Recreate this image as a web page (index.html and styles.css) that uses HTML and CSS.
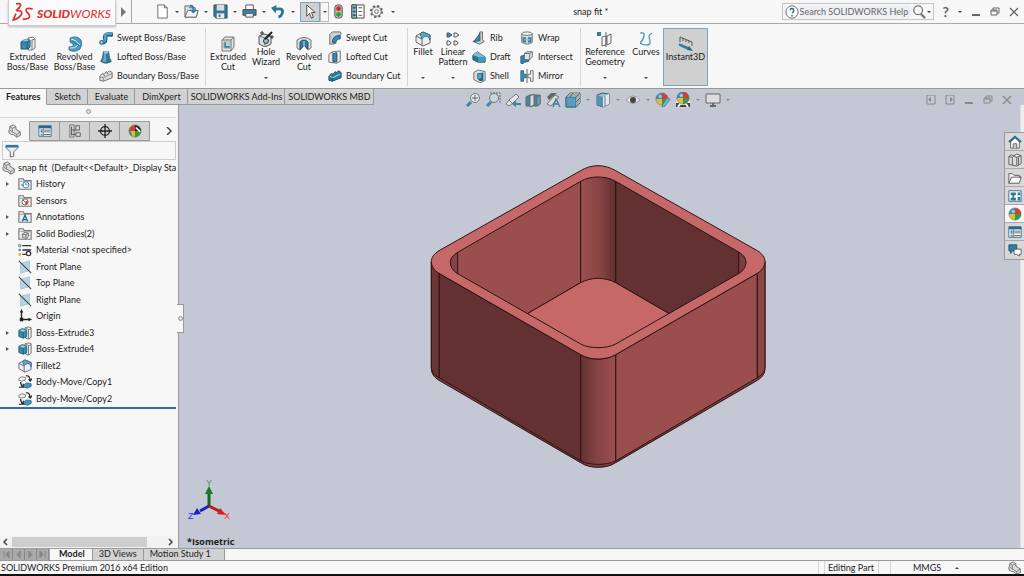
FILE: index.html
```html
<!DOCTYPE html>
<html lang="en">
<head>
<meta charset="utf-8">
<title>snap fit * - SOLIDWORKS</title>
<link rel="stylesheet" href="styles.css">
</head>
<body>
<svg class="defs" aria-hidden="true">
  <defs>
    <linearGradient id="front" x1="0" x2="1" y1="0" y2="0"><stop offset="0" stop-color="#633131"/><stop offset=".45" stop-color="#854242"/><stop offset="1" stop-color="#9d4f4f"/></linearGradient>
    <linearGradient id="back" x1="0" x2="1" y1="0" y2="0"><stop offset="0" stop-color="#9d4f4f"/><stop offset=".55" stop-color="#874444"/><stop offset="1" stop-color="#5f2f2f"/></linearGradient>
    <clipPath id="hollow"><path d="M113 307L482 94C497 85 515 81 534 81S572 85 587 94L956 306C971 315 978 326 978 337S971 362 956 371L587 582C572 590 553 593 534 593S497 590 482 582L113 371C98 362 91 350 91 338S98 316 113 307Z"/></clipPath>
    <clipPath id="disc"><circle cx="8" cy="8" r="7"/></clipPath>
  </defs>
  <symbol id="boss" viewBox="0 0 16 16"><path d="M8 2l5-1 2 2v9l-3 2H8z" fill="#eee" stroke="#777"/><path d="M12 4v10M12 4l3-1" fill="none" stroke="#777"/><path d="M1 6l3-2h6v7l-2 2H1z" fill="#3b8ab0" stroke="#1d5a78"/><path d="M1 6l3-2h6L7 6z" fill="#8cc6df"/><path d="M1 6h6v7M7 6l3-2" fill="none" stroke="#1d5a78"/></symbol>
  <symbol id="solid" viewBox="0 0 16 16"><path d="M8 2l4-1 3 1v11l-3 2-3-1z" fill="#eee" stroke="#666"/><path d="M12 4v11M12 4l3-1M8 2l4 2" fill="none" stroke="#777"/><path d="M1 5l4-2 5 2v7l-4 2-5-2z" fill="#3b8ab0" stroke="#1d5a78"/><path d="M1 5l4-2 5 2-4 2z" fill="#9bd0e4" stroke="#1d5a78" stroke-width=".6"/><path d="M6 7v7" stroke="#1d5a78"/></symbol>
  <symbol id="revolve" viewBox="0 0 16 16"><path d="M3 2Q10-1 14 4q2 5-1 9-5 4-11 1v-3q3 0 5-2L3 6z" fill="#4a9cc2" stroke="#28698a" stroke-width=".8"/><path d="M4 3q4 0 9 6M3 12q5 1 8-3" fill="none" stroke="#d5eef8"/><path d="M5 5l8 5" stroke="#28698a" stroke-width=".8"/></symbol>
  <symbol id="swept" viewBox="0 0 16 16"><path d="M3 13q5 0 4-5t7-4" fill="none" stroke="#1f5f80" stroke-width="5" stroke-linecap="round"/><path d="M3 12q5 0 4-5t7-4" fill="none" stroke="#4ba1c8" stroke-width="3" stroke-linecap="round"/><circle cx="3" cy="13" r="2" fill="#a9d5e6" stroke="#1f5f80"/></symbol>
  <symbol id="loft" viewBox="0 0 16 16"><path d="M5 2q3-1 6 0 0 7 3 11-6 4-12 0 3-4 3-11z" fill="#34799c" stroke="#1f5673"/><path d="M6 3q0 6-2 10l4 1V3z" fill="#69aac8"/><ellipse cx="8" cy="2.500" rx="3" ry="1.500" fill="#8fc6dd"/></symbol>
  <symbol id="boundary" viewBox="0 0 16 16"><path d="M1 8l3-3 2 1 2-3 2 1 2-2 3 2v6L5 14l-4-1z" fill="#ddd" stroke="#666"/><path d="M1 9l4 1 10-5M5 10v4M4 6l3 2M8 4l3 2" fill="none" stroke="#888"/></symbol>
  <symbol id="boundarycut" viewBox="0 0 16 16"><path d="M1 8l3-3 2 1 2-3 2 1 2-2 3 2v6L5 14l-4-1z" fill="#2e7ba0" stroke="#1b4d67"/><path d="M2 8l3 2 9-4" fill="none" stroke="#c6e4f0"/><path d="M5 10v4" stroke="#173f54"/></symbol>
  <symbol id="cut" viewBox="0 0 16 16"><path d="M2 4l3-3h9v10l-3 4H2z" fill="#e2e2e2" stroke="#777"/><path d="M2 4h9v11M11 4l3-3" fill="none" stroke="#777"/><path d="M4 6h6v6H4z" fill="#3583aa" stroke="#9b9b9b"/><path d="M6 6h4v4H6z" fill="#a8d5e6"/></symbol>
  <symbol id="hole" viewBox="0 0 16 16"><path d="M1 5l5-2 7 2v8l-6 3-6-3z" fill="#ddd" stroke="#555"/><path d="M1 5l6 2 6-2M7 7v9" fill="none" stroke="#777"/><circle cx="8" cy="10" r="2.500" fill="#8cc0d6" stroke="#333"/><path d="M7 8l7-7" stroke="#222" stroke-width="2"/><path d="M4 0v4M2 2h4M14 4v4M12 6h4" stroke="#333"/></symbol>
  <symbol id="revcut" viewBox="0 0 16 16"><path d="M1 4q7-5 14 0v8l-3 2-1-1-3-4-3 4-1 1-3-2z" fill="#ddd" stroke="#777"/><path d="M4 6q4-4 8 0v7L8 9l-4 5z" fill="#2f7ea5" stroke="#1b546f"/><path d="M8 5v5" stroke="#b8dfec"/></symbol>
  <symbol id="sweptcut" viewBox="0 0 16 16"><path d="M2 4l3-3h9l1 2-2 2v3l-4 1-2 6H2z" fill="#cfcfcf" stroke="#666"/><path d="M5 13Q5 5 14 5v4q-5 0-5 5z" fill="#3a8ab0" stroke="#1b546f"/></symbol>
  <symbol id="loftcut" viewBox="0 0 16 16"><path d="M1 5l4-3 9-1v12l-4 2-9-1z" fill="#eee" stroke="#666"/><path d="M5 2v11M10 4v11" stroke="#777"/><path d="M6 4l4-1v10l-4 1z" fill="#3a8ab0" stroke="#1b546f"/></symbol>
  <symbol id="fillet" viewBox="0 0 16 16"><path d="M1 5l7-4 7 3v8l-7 3-7-4z" fill="#eee" stroke="#666"/><path d="M1 5l6 3v7" fill="none" stroke="#666"/><path d="M5 3l3-2 7 3v5q-1-4-4-4-3 1-4 3z" fill="#5aa7c8" stroke="#22627f" stroke-width=".8"/></symbol>
  <symbol id="pattern" viewBox="0 0 16 16"><g fill="#eee" stroke="#555"><path d="M2 2h2l3 2-3 2H2z" fill="#3a8fb7"/><path d="M9 2h2l3 2-3 2H9zM2 10h2q4 2 0 4H2zM9 10h2q4 2 0 4H9z"/></g></symbol>
  <symbol id="rib" viewBox="0 0 16 16"><path d="M9 1h3v9l2 2-5 3-8-3 6-2z" fill="#ccc" stroke="#666"/><path d="M9 3v8l-7 1z" fill="#3489ae" stroke="#1d5a78"/></symbol>
  <symbol id="draft" viewBox="0 0 16 16"><path d="M1 6l5-4 9 6v6H7l-6-3z" fill="#287397" stroke="#1d526b"/><path d="M1 6l5-4 9 6H7z" fill="#7dbdd7"/><path d="M7 8h8v6H7z" fill="#4796b9"/></symbol>
  <symbol id="shell" viewBox="0 0 16 16"><path d="M2 4l5-3 8 2v10l-6 3-7-4z" fill="#ddd" stroke="#666"/><path d="M6 5l7-1v9l-4 1-3-3z" fill="#1f5f7f"/><path d="M7 6l4-1v5L7 12z" fill="#52a8cb"/></symbol>
  <symbol id="wrap" viewBox="0 0 16 16"><path d="M2 3v10q6 4 12 0V3z" fill="#ddd" stroke="#666"/><ellipse cx="8" cy="3" rx="6" ry="2" fill="#f5f5f5" stroke="#666"/><path d="M3 7h4v6H3zM9 7h4v6H9z" fill="#2b7da5"/><path d="M5 9h6v2H5z" fill="#90c7dc"/></symbol>
  <symbol id="intersect" viewBox="0 0 16 16"><path d="M1 7l4-1v4h5v3l-5 1-2 2-2-1z" fill="#3385ab" stroke="#1d5a78"/><path d="M5 4l3-2h6v6l-3 3H5z" fill="#e5e5e5" stroke="#666"/><path d="M5 4h6v7M11 4l3-2" fill="none" stroke="#666"/></symbol>
  <symbol id="mirror" viewBox="0 0 16 16"><path d="M1 2h3v4h3v4H4v4H1z" fill="#3b90b6" stroke="#22627f"/><path d="M15 2h-3v4H9v4h3v4h3z" fill="#eee" stroke="#666"/><path d="M8 0v16" stroke="#555"/></symbol>
  <symbol id="refgeo" viewBox="0 0 16 16"><path d="M0 1h4v4H0z" fill="#2b7ea6"/><path d="M5 6l4-1v9l-4 1zM10 5l4-2v9l-4 2zM9 1v15" fill="none" stroke="#666"/></symbol>
  <symbol id="curves" viewBox="0 0 16 16"><path d="M2 2q5-1 4 3t-3 6 5 3q5 0 4-4t-1-5 3-3" fill="none" stroke="#3b8fb5" stroke-width="1.200"/></symbol>
  <symbol id="instant" viewBox="0 0 16 16"><path d="M2 6V1l12 5v4M5 2v3M8 4v2M11 5v2" fill="none" stroke="#555"/><path d="M1 9l9 4M1 8l10 4" stroke="#2e7fa6" stroke-width="1.500"/><path d="M11 10l4 5-6-1z" fill="#28698a"/></symbol>

  <symbol id="new" viewBox="0 0 16 16"><path d="M3 1h7l3 3v11H3z" fill="#fff" stroke="#666"/><path d="M10 1v3h3" fill="none" stroke="#666"/></symbol>
  <symbol id="open" viewBox="0 0 16 16"><path d="M1 14V2h4l1 2h6v3h3l-2 7z" fill="#ddd" stroke="#666"/><path d="M1 14l3-7h11l-2 7z" fill="#f4f4f4" stroke="#666"/><path d="M6 2q4-1 4 4" fill="none" stroke="#2a7ba2" stroke-width="2"/><path d="M6 6h8l-4 4z" fill="#2a7ba2"/></symbol>
  <symbol id="save" viewBox="0 0 16 16"><path d="M1 1h14v14H3l-2-2z" fill="#30799c" stroke="#444"/><path d="M4 1h8v6H4z" fill="#ddd"/><path d="M4 10h8v5H4z" fill="#eee"/><path d="M6 11h2v3H6z" fill="#30799c"/></symbol>
  <symbol id="print" viewBox="0 0 16 16"><path d="M4 6V1h8v5" fill="#fff" stroke="#555"/><path d="M1 6h14v6H1z" fill="#3a83a5" stroke="#444"/><path d="M4 10h8v4H4z" fill="#eee" stroke="#555"/></symbol>
  <symbol id="undo" viewBox="0 0 16 16"><path d="M3 6q11-3 9 4-1 3-4 4" fill="none" stroke="#2d7699" stroke-width="3"/><path d="M6 1L5 10 0 4z" fill="#2d7699"/></symbol>
  <symbol id="cursor" viewBox="0 0 16 16"><path d="M4 1v12l3-3 2 5 2-1-2-5h4z" fill="#fff" stroke="#444"/></symbol>
  <symbol id="lights" viewBox="0 0 16 16"><rect x="4" y="1" width="8" height="14" rx="3" fill="#bbb" stroke="#555"/><circle cx="8" cy="5" r="2.500" fill="#d22"/><circle cx="8" cy="11" r="2.500" fill="#2a2"/></symbol>
  <symbol id="list" viewBox="0 0 16 16"><path d="M2 1h13v14H2z" fill="#fff" stroke="#444"/><path d="M2 1h5v14H2z" fill="#9bc9dc" stroke="#444"/><path d="M3 4h3M3 8h3M3 12h3" stroke="#2a5a70" stroke-width="2"/><path d="M9 4h4M9 8h4M9 12h4" stroke="#555"/></symbol>
  <symbol id="props" viewBox="0 0 16 16"><path d="M1 2h14v12H1z" fill="#fff" stroke="#24688a"/><path d="M1 2h14v3H1z" fill="#24688a"/><path d="M3 7h2M3 9h2M3 12h2" stroke="#3489ae" stroke-width="2"/><path d="M7 7h7M7 9h7M7 12h7M6 5v9" stroke="#555"/></symbol>
  <symbol id="gear" viewBox="0 0 16 16"><circle cx="8" cy="8" r="5" fill="none" stroke="#666"/><circle cx="8" cy="8" r="6" fill="none" stroke="#666" stroke-width="2" stroke-dasharray="2.400 2.300"/><circle cx="8" cy="8" r="2" fill="none" stroke="#666"/></symbol>
  <symbol id="lens" viewBox="0 0 16 16"><circle cx="7" cy="6" r="5" fill="none" stroke="#777" stroke-width="1.500"/><path d="M10 10l5 5" stroke="#777" stroke-width="2.500"/></symbol>
  <symbol id="helpring" viewBox="0 0 16 16"><circle cx="8" cy="8" r="7" fill="#fff" stroke="#555"/><path d="M6 6q0-2 2-2t2 2-2 3M8 11v2" fill="none" stroke="#207099" stroke-width="1.700"/></symbol>
  <symbol id="min" viewBox="0 0 10 10"><path d="M1 8h8" stroke="currentColor" stroke-width="2"/></symbol>
  <symbol id="restore" viewBox="0 0 10 10"><path d="M3 3V1h6v5H7M1 3h6v5H1z" fill="none" stroke="currentColor"/><path d="M1 4h6" stroke="currentColor"/></symbol>
  <symbol id="close" viewBox="0 0 10 10"><path d="M1 1l8 8M9 1L1 9" stroke="currentColor" stroke-width="1.300"/></symbol>
  <symbol id="paneleft" viewBox="0 0 10 10"><path d="M1 0h8v9H1z" fill="none" stroke="currentColor"/><path d="M5 2v5L2 4.500z" fill="currentColor"/></symbol>
  <symbol id="paneright" viewBox="0 0 10 10"><path d="M1 0h8v9H1z" fill="none" stroke="currentColor"/><path d="M5 2v5l3-2.500z" fill="currentColor"/></symbol>

  <symbol id="zoomfit" viewBox="0 0 16 16"><path d="M6 10l-4 4" stroke="#3d84a5" stroke-width="3"/><circle cx="10" cy="6" r="4.500" fill="#e4e8ee" stroke="#777"/><path d="M10 3v6M7 6h6" stroke="#666"/></symbol>
  <symbol id="zoomarea" viewBox="0 0 16 16"><path d="M5 1h10v10" fill="none" stroke="#666" stroke-dasharray="2 1"/><path d="M6 10l-4 4" stroke="#3d84a5" stroke-width="3"/><circle cx="9" cy="6" r="4.500" fill="#c9d6df" stroke="#777"/></symbol>
  <symbol id="prev" viewBox="0 0 16 16"><path d="M1 12l3-4 7-6 3 3-6 6-4 3z" fill="#e5e5e5" stroke="#777"/><path d="M4 8l3 3" stroke="#777"/><path d="M9 12h7" stroke="#3d84a5" stroke-width="2"/><path d="M11 8v7l-4-3z" fill="#3d84a5"/></symbol>
  <symbol id="section" viewBox="0 0 16 16"><path d="M1 5l4-2h10v9l-3 2H1z" fill="#4587a6" stroke="#666"/><path d="M5 4l4-2v11l-4 2z" fill="#ddd" stroke="#666"/><path d="M12 5l3-2v9l-3 2z" fill="#68a9c5" stroke="#666"/></symbol>
  <symbol id="annview" viewBox="0 0 16 16"><path d="M2 5l4-4h6L4 8z" fill="#666"/><path d="M2 12l8-9 4 2-8 9z" fill="#ddd" stroke="#777"/><path d="M8 15l3-8 4 8M9 12h5" fill="none" stroke="#3d84a5" stroke-width="1.500"/></symbol>
  <symbol id="orient" viewBox="0 0 16 16"><path d="M1 5l4-4h10v10l-4 4H1z" fill="#eee" stroke="#666"/><path d="M11 5l4-4M8 1L5 5M13 3v10M3 3h10M11 10l4-4" fill="none" stroke="#666"/><path d="M1 5h10v10H1z" fill="#5a9dbb" stroke="#2f6f8e"/></symbol>
  <symbol id="cube" viewBox="0 0 16 16"><path d="M2 3l5-2 7 1v10l-6 3-6-2z" fill="#8fc1d6" stroke="#555"/><path d="M2 3l6 2v10l-6-2z" fill="#4f94b3"/><path d="M8 5l6-3v10l-6 3z" fill="#dcebf2"/><path d="M10 4v10" stroke="#777"/></symbol>
  <symbol id="eye" viewBox="0 0 16 16"><path d="M1 8q7-8 14 0-7 7-14 0z" fill="#e5e7eb" stroke="#999"/><circle cx="8" cy="8" r="3" fill="#444"/></symbol>
  <symbol id="ball" viewBox="0 0 16 16"><g clip-path="url(#disc)"><path d="M0 0h8v8H0z" fill="#348dc1"/><path d="M8 0h8v8l-8 1z" fill="#d93b32"/><path d="M0 8h8v8H0z" fill="#e4bb32"/><path d="M8 8h8v8H8z" fill="#2f9e45"/><circle cx="6" cy="5" r="2" fill="#fff" opacity=".5"/></g><circle cx="8" cy="8" r="7" fill="none" stroke="#666" stroke-width=".6"/></symbol>
  <symbol id="display" viewBox="0 0 16 16"><g clip-path="url(#disc)"><path d="M0 0h8v8H0z" fill="#d93b32"/><path d="M8 0h8v8H8z" fill="#222"/><path d="M0 8h8v8H0z" fill="#e9b91f"/><path d="M8 8h8v8H8z" fill="#2f9e45"/><path d="M0 6q4 0 5 10L0 16z" fill="#348dc1"/><path d="M9 4l5 5" stroke="#fff" stroke-width="2"/></g><circle cx="8" cy="8" r="7" fill="none" stroke="#666" stroke-width=".6"/></symbol>
  <symbol id="ballpen" viewBox="0 0 16 16"><use href="#ball" x="0" y="-1" width="14" height="16"/><path d="M15 7l-5 7-3 1 1-3 4-6z" fill="#7ab0c8" stroke="#4a88a5"/></symbol>
  <symbol id="scene" viewBox="0 0 16 16"><path d="M1 9h14v6H1z" fill="#444"/><path d="M3 15l2-3h6l2 3M1 10h3M12 10h3" stroke="#eee" stroke-width="2" fill="none"/><use href="#ball" x="1" y="-1" width="14" height="14"/></symbol>
  <symbol id="screen" viewBox="0 0 16 16"><path d="M1 2h14v9H1z" fill="#ddd" stroke="#666"/><path d="M8 11v3M5 14h6" stroke="#666" stroke-width="2"/></symbol>

  <symbol id="part" viewBox="0 0 16 16"><path d="M2 6V3l4-2 3 2v3l5 3v4l-4 2-4-3H4L1 10V7z" fill="#ddd" stroke="#666"/><path d="M2 3l3 2 4-2M5 5v4l5 3 4-3M10 12v3M2 7l3 2" fill="none" stroke="#777"/></symbol>
  <symbol id="config" viewBox="0 0 16 16"><path d="M2 1h5v14H2z" fill="#ccc" stroke="#777"/><path d="M4 3v10M4 7h6M4 12h6" stroke="#555"/><path d="M9 2h4v5H9zM9 10h5v4H9z" fill="#ddd" stroke="#555"/></symbol>
  <symbol id="target" viewBox="0 0 16 16"><circle cx="8" cy="8" r="5" fill="none" stroke="#222" stroke-width="1.500"/><path d="M8 0v16M0 8h16" stroke="#222" stroke-width="1.500"/></symbol>
  <symbol id="funnel" viewBox="0 0 16 16"><path d="M1 2h14v2l-5 5v5l-4 1V9L1 4z" fill="#eee" stroke="#555"/><path d="M1 1h14v3H1z" fill="#2878a0"/></symbol>
  <symbol id="folder" viewBox="0 0 16 16"><path d="M1 14V2h5l1 2h8v10z" fill="#eee" stroke="#777" stroke-width="1.300"/><path d="M2 5h12" stroke="#999"/></symbol>
  <symbol id="history" viewBox="0 0 16 16"><use href="#folder"/><circle cx="9" cy="9" r="3.500" fill="#fff" stroke="#2b7ba2"/><path d="M9 7v2h2M4 8l1 2 2-1" fill="none" stroke="#2b7ba2"/></symbol>
  <symbol id="sensors" viewBox="0 0 16 16"><use href="#folder"/><circle cx="8" cy="9" r="3.500" fill="#fff" stroke="#555"/><path d="M8 9l3-2v4l-2 1z" fill="#d43b24"/><path d="M8 9L6 7" stroke="#333"/></symbol>
  <symbol id="annot" viewBox="0 0 16 16"><use href="#folder"/><path d="M5 13l3-7 3 7M6 11h4" fill="none" stroke="#1e6b92" stroke-width="1.500"/></symbol>
  <symbol id="bodies" viewBox="0 0 16 16"><use href="#folder"/><path d="M5 8l3-2 4 1v4l-3 2-4-1zM5 8l4 1v4M9 9l3-2" fill="#ddd" stroke="#666"/></symbol>
  <symbol id="material" viewBox="0 0 16 16"><path d="M5 3h10M5 8h10M5 13h4" stroke="#333" stroke-width="1.500"/><circle cx="2" cy="3" r="1.500" fill="#ddd" stroke="#666"/><circle cx="2" cy="8" r="1.500" fill="#3a8fb7"/><circle cx="2" cy="13" r="1.500" fill="#e2ab25"/><circle cx="12" cy="12" r="2.500" fill="#fff" stroke="#333" stroke-width="1.500"/></symbol>
  <symbol id="plane" viewBox="0 0 16 16"><path d="M3 4l10-3v11L3 15z" fill="#b5d5e2" stroke="#9cc2d1"/><path d="M1 1l14 14" stroke="#444" stroke-width="1.200"/></symbol>
  <symbol id="origin" viewBox="0 0 16 16"><path d="M4 3v9h9" fill="none" stroke="#222" stroke-width="1.500"/><path d="M4 0l2 4H2zM16 12l-4-2v4zM2 10h4v4H2z" fill="#222"/></symbol>
  <symbol id="move" viewBox="0 0 16 16"><path d="M1 4l3-2 5 1-1 3-4 1-3-1z" fill="#eee" stroke="#777"/><path d="M7 11l3-2 5 1v3l-4 2-4-1z" fill="#4196bb" stroke="#256b8d"/><path d="M9 1q4-1 5 5M12 5l2 2 2-3M3 8q0 4 3 6M1 14h5v-4" fill="none" stroke="#222" stroke-width="1.400"/></symbol>

  <symbol id="home" viewBox="0 0 16 16"><path d="M3 8v7h10V8L8 3z" fill="#fff" stroke="#555"/><path d="M1 8l7-6 7 6" fill="none" stroke="#28698a" stroke-width="2"/><path d="M6 15v-5h4v5" fill="#ccc" stroke="#555"/></symbol>
  <symbol id="books" viewBox="0 0 16 16"><path d="M1 4l3-2 3 1 3-2 5 2v9l-5 3-9-2z" fill="#ddd" stroke="#555"/><path d="M1 4l4 1v9M5 5l2-2M7 4l3 1v9M10 5l5-2M12 5v9" fill="none" stroke="#555"/></symbol>
  <symbol id="file" viewBox="0 0 16 16"><path d="M1 14V3h4l2 2h6v2h2l-2 7z" fill="#f5f5f5" stroke="#555"/><path d="M1 14l3-7h11" fill="none" stroke="#555"/></symbol>
  <symbol id="palette" viewBox="0 0 16 16"><path d="M1 2h14v12H1z" fill="#fff" stroke="#24688a"/><path d="M3 4h6v3H3zM11 4h3v3h-3zM5 7h2v3H5zM3 10h6v3H3zM11 9h3v4h-3z" fill="#30799c"/></symbol>
  <symbol id="chat" viewBox="0 0 16 16"><path d="M1 2h9v7H5l-2 3V9H1z" fill="#317b9f" stroke="#1f5a78"/><path d="M7 7h8v6h-2v2l-3-2H7z" fill="#fff" stroke="#555"/></symbol>
</svg>

<header class="titlebar">
  <div class="brand">
    <svg class="brand-mark" viewBox="0 0 66 60" aria-hidden="true"><g fill="none" stroke="#d9302c" stroke-width="5" stroke-linejoin="round"><path d="M12 6q16-3 14 4-3 8-14 16"/><path d="M14 27q18-3 15 8-5 13-26 20l9-20"/><path d="M62 21q-21-5-20 4 0 4 8 11 6 8-1 13-5 3-17 3"/></g></svg>
    <span class="brand-name"><b>SOLID</b>WORKS</span>
  </div>
  <button class="play" aria-label="Show menu"><i></i></button>
  <div class="quick">
    <button aria-label="New"><svg><use href="#new"/></svg></button><i class="caret"></i>
    <button aria-label="Open"><svg><use href="#open"/></svg></button><i class="caret"></i>
    <button aria-label="Save"><svg><use href="#save"/></svg></button><i class="caret"></i>
    <button aria-label="Print"><svg><use href="#print"/></svg></button><i class="caret"></i>
    <button aria-label="Undo"><svg><use href="#undo"/></svg></button><i class="caret"></i>
    <button class="picked" aria-label="Select"><svg><use href="#cursor"/></svg></button><button class="drop" aria-label="Select options"><i class="caret"></i></button>
    <button class="wide" aria-label="Rebuild"><svg><use href="#lights"/></svg></button>
    <button class="wide" aria-label="File properties"><svg><use href="#list"/></svg></button>
    <button class="wide" aria-label="Options"><svg><use href="#gear"/></svg></button><i class="caret"></i>
  </div>
  <h1 class="doc-title">snap fit *</h1>
  <form class="search">
    <svg><use href="#helpring"/></svg>
    <input type="text" aria-label="Search SOLIDWORKS Help" placeholder="Search SOLIDWORKS Help">
    <button type="button" aria-label="Search"><svg><use href="#lens"/></svg></button><i class="caret"></i>
  </form>
  <div class="window-tools">
    <button class="help" aria-label="Help">?</button><i class="caret"></i>
    <button aria-label="Minimize"><svg><use href="#min"/></svg></button>
    <button aria-label="Restore"><svg><use href="#restore"/></svg></button>
    <button aria-label="Close"><svg><use href="#close"/></svg></button>
  </div>
</header>

<section class="ribbon" aria-label="Features">
  <div class="group">
    <button class="big"><svg><use href="#boss"/></svg><span>Extruded<br>Boss/Base</span></button>
    <button class="big"><svg><use href="#revolve"/></svg><span>Revolved<br>Boss/Base</span></button>
    <div class="stack">
      <button><svg><use href="#swept"/></svg>Swept Boss/Base</button>
      <button><svg><use href="#loft"/></svg>Lofted Boss/Base</button>
      <button><svg><use href="#boundary"/></svg>Boundary Boss/Base</button>
    </div>
  </div>
  <div class="group cuts">
    <button class="big"><svg><use href="#cut"/></svg><span>Extruded<br>Cut</span></button>
    <button class="big menu"><svg><use href="#hole"/></svg><span>Hole<br>Wizard</span><i class="caret"></i></button>
    <button class="big"><svg><use href="#revcut"/></svg><span>Revolved<br>Cut</span></button>
    <div class="stack">
      <button><svg><use href="#sweptcut"/></svg>Swept Cut</button>
      <button><svg><use href="#loftcut"/></svg>Lofted Cut</button>
      <button><svg><use href="#boundarycut"/></svg>Boundary Cut</button>
    </div>
  </div>
  <div class="group shapes">
    <button class="big menu"><svg><use href="#fillet"/></svg><span>Fillet</span><i class="caret"></i></button>
    <button class="big menu"><svg><use href="#pattern"/></svg><span>Linear<br>Pattern</span><i class="caret"></i></button>
    <div class="stack">
      <button><svg><use href="#rib"/></svg>Rib</button>
      <button><svg><use href="#draft"/></svg>Draft</button>
      <button><svg><use href="#shell"/></svg>Shell</button>
    </div>
    <div class="stack">
      <button><svg><use href="#wrap"/></svg>Wrap</button>
      <button><svg><use href="#intersect"/></svg>Intersect</button>
      <button><svg><use href="#mirror"/></svg>Mirror</button>
    </div>
  </div>
  <div class="group refs">
    <button class="big menu"><svg><use href="#refgeo"/></svg><span>Reference<br>Geometry</span><i class="caret"></i></button>
    <button class="big menu"><svg><use href="#curves"/></svg><span>Curves</span><i class="caret"></i></button>
    <button class="big active"><svg><use href="#instant"/></svg><span>Instant3D</span></button>
  </div>
</section>

<nav class="tabs" aria-label="Command tabs">
  <a href="#" class="current">Features</a><a href="#">Sketch</a><a href="#">Evaluate</a><a href="#">DimXpert</a><a href="#" class="tight">SOLIDWORKS Add-Ins</a><a href="#" class="tight">SOLIDWORKS MBD</a>
</nav>

<main class="work">
  <aside class="panel">
    <div class="grip"><i class="dot"></i></div>
    <div class="panel-tabs">
      <button class="current" aria-label="FeatureManager"><svg><use href="#part"/></svg></button>
      <button aria-label="PropertyManager"><svg><use href="#props"/></svg></button>
      <button aria-label="ConfigurationManager"><svg><use href="#config"/></svg></button>
      <button aria-label="DimXpertManager"><svg><use href="#target"/></svg></button>
      <button aria-label="DisplayManager"><svg><use href="#display"/></svg></button>
      <button class="more" aria-label="More tabs"><svg viewBox="0 0 8 8"><path d="M2 0l4 4-4 4" fill="none" stroke="#444" stroke-width="1.500"/></svg></button>
    </div>
    <div class="filter"><svg><use href="#funnel"/></svg><input type="text" aria-label="Filter"></div>
    <div class="root"><svg><use href="#part"/></svg><span>snap fit&nbsp; (Default&lt;&lt;Default&gt;_Display Sta</span></div>
    <ul class="tree">
      <li class="open"><svg><use href="#history"/></svg>History</li>
      <li><svg><use href="#sensors"/></svg>Sensors</li>
      <li class="open"><svg><use href="#annot"/></svg>Annotations</li>
      <li class="open"><svg><use href="#bodies"/></svg>Solid Bodies(2)</li>
      <li><svg><use href="#material"/></svg>Material &lt;not specified&gt;</li>
      <li><svg><use href="#plane"/></svg>Front Plane</li>
      <li><svg><use href="#plane"/></svg>Top Plane</li>
      <li><svg><use href="#plane"/></svg>Right Plane</li>
      <li><svg><use href="#origin"/></svg>Origin</li>
      <li class="open"><svg><use href="#solid"/></svg>Boss-Extrude3</li>
      <li class="open"><svg><use href="#solid"/></svg>Boss-Extrude4</li>
      <li><svg><use href="#fillet"/></svg>Fillet2</li>
      <li><svg><use href="#move"/></svg>Body-Move/Copy1</li>
      <li><svg><use href="#move"/></svg>Body-Move/Copy2</li>
    </ul>
    <div class="scroll">
      <button aria-label="Scroll left"><svg viewBox="0 0 8 8"><path d="M6 1L3 4l3 3" fill="none" stroke="#444" stroke-width="1.500"/></svg></button>
      <i class="thumb"></i>
      <button aria-label="Scroll right"><svg viewBox="0 0 8 8"><path d="M2 1l3 3-3 3" fill="none" stroke="#444" stroke-width="1.500"/></svg></button>
    </div>
    <button class="splitter" aria-label="Collapse panel"><i class="dot"></i></button>
  </aside>

  <section class="view" aria-label="Graphics area">
    <div class="hud">
      <button aria-label="Zoom to fit"><svg><use href="#zoomfit"/></svg></button>
      <button aria-label="Zoom to area"><svg><use href="#zoomarea"/></svg></button>
      <button aria-label="Previous view"><svg><use href="#prev"/></svg></button>
      <button aria-label="Section view"><svg><use href="#section"/></svg></button>
      <button aria-label="Annotation views"><svg><use href="#annview"/></svg></button>
      <button aria-label="View orientation"><svg><use href="#orient"/></svg></button><i class="caret"></i>
      <button aria-label="Display style"><svg><use href="#cube"/></svg></button><i class="caret"></i>
      <button aria-label="Hide or show items"><svg><use href="#eye"/></svg></button><i class="caret"></i>
      <button aria-label="Edit appearance"><svg><use href="#ballpen"/></svg></button>
      <button aria-label="Apply scene"><svg><use href="#scene"/></svg></button><i class="caret"></i>
      <button aria-label="View settings"><svg><use href="#screen"/></svg></button><i class="caret"></i>
    </div>
    <div class="doc-tools">
      <button aria-label="Dock left"><svg><use href="#paneleft"/></svg></button>
      <button aria-label="Dock right"><svg><use href="#paneright"/></svg></button>
      <button aria-label="Minimize document"><svg><use href="#min"/></svg></button>
      <button aria-label="Restore document"><svg><use href="#restore"/></svg></button>
      <button aria-label="Close document"><svg><use href="#close"/></svg></button>
    </div>

    <svg class="model" viewBox="0 0 1080 990" role="img" aria-label="Open box with rounded corners">
      <g stroke="#2a1414" stroke-width="3" stroke-linejoin="round">
        <path fill="#7b3d3d" d="M34 335V655C34 670 42 682 57 691L482 938C497 948 515 952 534 952S572 948 587 938L1012 691C1027 682 1035 670 1035 655V335Z"/>
        <path fill="#633131" d="M57 370V683L482 933V614Z"/>
        <path fill="#9b4e4e" d="M1012 370V683L587 933V614Z"/>
        <path fill="#8c4646" d="M1012 370V683Q1035 670 1035 652V335Z"/>
        <path fill="#6d3636" d="M57 370V683Q34 670 34 652V335Z"/>
        <path fill="url(#front)" d="M482 614V933C497 940 515 943 534 943S572 940 587 933V614C572 623 553 627 534 627S497 623 482 614Z"/>
        <path fill="#c76868" d="M57 302L482 62C497 53 515 47 534 47S572 53 587 62L1012 302C1027 311 1035 323 1035 335S1027 361 1012 370L587 614C572 623 553 627 534 627S497 623 482 614L57 370C42 361 34 347 34 335S42 311 57 302Z"/>
        <g clip-path="url(#hollow)">
          <path fill="#9b4e4e" d="M80 0H482V398L280 516L80 400Z"/>
          <path fill="#633131" d="M587 0H1000V400L790 516L587 398Z"/>
          <path fill="url(#back)" d="M482 60H587V420H482Z"/>
          <path fill="#864343" d="M80 280H113V420H80Z"/>
          <path fill="#7b3d3d" d="M956 280H990V420H956Z"/>
          <path fill="#c76868" d="M534 385C515 385 497 390 482 398L250 533L534 700L820 533L587 398C572 390 553 385 534 385Z"/>
        </g>
        <path fill="none" d="M113 307L482 94C497 85 515 81 534 81S572 85 587 94L956 306C971 315 978 326 978 337S971 362 956 371L587 582C572 590 553 593 534 593S497 590 482 582L113 371C98 362 91 350 91 338S98 316 113 307Z"/>
      </g>
    </svg>

    <svg class="triad" viewBox="0 0 42 42" aria-hidden="true">
      <path d="M21 27V13" stroke="#146b1d" stroke-width="3"/><path d="M21 7l4 8h-8z" fill="#187a22"/>
      <path d="M21 27l-9 5" stroke="#2020b8" stroke-width="3"/><path d="M5 36l4-7 4 6z" fill="#2020c8"/>
      <path d="M21 27l10 5" stroke="#b81c1c" stroke-width="3"/><path d="M38 36l-9-1 3-6z" fill="#d02020"/>
      <text x="18" y="7" fill="#3f9f3f">Y</text><text x="0" y="40" fill="#2a2af0">Z</text><text x="36" y="40" fill="#f03030">X</text>
    </svg>
    <strong class="view-name">*Isometric</strong>
  </section>

  <div class="edge"></div>
  <nav class="task-pane" aria-label="Task pane">
    <button aria-label="Resources"><svg><use href="#home"/></svg></button>
    <button aria-label="Design library"><svg><use href="#books"/></svg></button>
    <button aria-label="File explorer"><svg><use href="#file"/></svg></button>
    <button aria-label="View palette"><svg><use href="#palette"/></svg></button>
    <button class="current" aria-label="Appearances"><svg><use href="#ball"/></svg></button>
    <button aria-label="Custom properties"><svg><use href="#props"/></svg></button>
    <button aria-label="Forum"><svg><use href="#chat"/></svg></button>
  </nav>
</main>

<nav class="sheets" aria-label="Sheets">
  <div class="pager">
    <button aria-label="First"><svg viewBox="0 0 8 8"><path d="M1 0v8M7 0L3 4l4 4z"/></svg></button>
    <button aria-label="Previous"><svg viewBox="0 0 8 8"><path d="M6 0L2 4l4 4z"/></svg></button>
    <button aria-label="Next"><svg viewBox="0 0 8 8"><path d="M2 0l4 4-4 4z"/></svg></button>
    <button aria-label="Last"><svg viewBox="0 0 8 8"><path d="M7 0v8M1 0l4 4-4 4z"/></svg></button>
  </div>
  <a href="#" class="current">Model</a><a href="#">3D Views</a><a href="#" class="study">Motion Study 1</a>
</nav>

<footer class="status">
  <span class="edition">SOLIDWORKS Premium 2016 x64 Edition</span>
  <span class="cell"></span>
  <span class="cell mode">Editing Part</span>
  <span class="cell gap"></span>
  <button class="cell units">MMGS<i class="caret up"></i></button>
  <svg><use href="#part"/></svg>
</footer>
</body>
</html>
```

FILE: styles.css
```css
* { box-sizing: border-box; }
body {
  margin: 0;
  min-height: 100vh;
  display: flex;
  flex-direction: column;
  overflow: hidden;
  background: #f7f7f7;
  border-bottom: 2px solid #111;
  color: #1c1c1c;
  font: 9px/10px Lato, "Open Sans", sans-serif;
}
button, input {
  margin: 0;
  padding: 0;
  border: 0;
  background: none;
  color: inherit;
  font: inherit;
}
a { color: inherit; text-decoration: none; }
svg { display: block; flex: none; width: 14px; height: 14px; }
.defs { position: absolute; width: 0; height: 0; }
.caret {
  flex: none;
  border: 2px solid transparent;
  border-top-color: #444;
  border-bottom: 0;
}
.caret.up { border-top: 0; border-bottom: 2px solid #444; }
.dot {
  width: 5px;
  height: 5px;
  border: 1px solid #999;
  border-radius: 50%;
  background: #ddd;
}

/* Title bar */
.titlebar {
  display: flex;
  align-items: center;
  height: 24px;
  border-bottom: 1px solid #aaa;
}
.brand {
  position: relative;
  z-index: 1;
  display: flex;
  align-items: center;
  align-self: flex-start;
  width: 108px;
  height: 26px;
  margin-left: 8px;
  padding: 0 0 2px 3px;
  border: 1px solid #ccc;
  border-top: 0;
  background: #fbfbfb;
  box-shadow: 0 1px 2px #bbb;
}
.brand-mark { width: 22px; height: 20px; }
.brand-name {
  margin: 4px 0 0 3px;
  color: #d9302c;
  font: italic 12px/16px Lato, sans-serif;
}
.brand-name b { font-weight: 900; }
.play {
  display: grid;
  place-items: center;
  align-self: stretch;
  width: 16px;
  border-right: 1px solid #aaa;
}
.play i { border: 5px solid transparent; border-left-color: #777; border-right: 0; }
.quick { display: flex; align-items: center; margin-left: 22px; }
.quick button { display: grid; place-items: center; width: 16px; height: 20px; }
.quick .caret { margin: 0 5px; }
.quick .caret + button { margin-left: -1px; }
.quick svg { width: 15px; height: 15px; }
.quick .picked { width: 20px; border: 1px solid #7aa5bf; background: #d0d0d0; }
.quick .picked.picked { margin-left: 0; }
.quick .drop { width: 9px; border: 1px solid #bbb; }
.quick .drop .caret { margin: 0; }
.quick .wide { width: 19px; }
.doc-title { flex: 1; margin: 0; font: inherit; text-align: center; }
.search {
  display: flex;
  align-items: center;
  width: 152px;
  height: 17px;
  padding: 0 2px;
  border: 1px solid #c4c4c4;
}
.search input { flex: 1; min-width: 0; height: 13px; margin-left: 1px; background: #eef0f4; }
.search input::placeholder { color: #666; opacity: 1; }
.search button { margin: 0 1px; }
.window-tools { display: flex; align-items: center; gap: 9px; margin: 0 5px 0 9px; color: #666; }
.window-tools svg, .doc-tools svg { width: 10px; height: 10px; }
.window-tools .help { font: 700 14px/16px Lato, sans-serif; }

/* Ribbon */
.ribbon { display: flex; height: 64px; padding: 4px 0 2px 4px; }
.group { display: flex; border-right: 1px solid #d5d5d5; }
.group:last-child { border: 0; }
.big {
  display: flex;
  flex-direction: column;
  align-items: center;
  width: 47px;
  padding-top: 8px;
  text-align: center;
}
.big svg { width: 16px; height: 16px; }
.big.menu { padding-top: 3px; }
.big .caret { margin-top: auto; margin-bottom: 7px; }
.stack { display: flex; flex-direction: column; width: 107px; padding-left: 1px; }
.stack button { display: flex; align-items: center; gap: 4px; height: 19px; white-space: nowrap; }
.cuts .big { width: 38px; }
.cuts { padding-left: 3px; }
.cuts .stack { width: 84px; padding-left: 5px; }
.shapes .big { width: 30px; }
.shapes .stack { width: 48px; padding-left: 4px; }
.shapes .stack + .stack { width: 64px; }
.refs .big { width: 34px; }
.refs .big:first-child { width: 48px; }
.refs .active { width: 45px; padding-top: 7px; border: 1px solid #7aa5bf; background: #d0d0d0; }

/* Command tabs */
.tabs { display: flex; height: 17px; border-top: 1px solid #999; background: #c4c8d4; }
.tabs a {
  padding: 3px 6px 0 7px;
  border: 1px solid #999;
  border-width: 0 1px 1px 0;
  background: #d2d2d2;
}
.tabs .tight { padding-left: 3px; padding-right: 2px; }
.tabs .current { padding-left: 6px; border-bottom-color: #f7f7f7; background: #f7f7f7; font-weight: 700; }

/* Work area */
.work { position: relative; flex: 1; display: flex; min-height: 0; }
.panel {
  position: relative;
  z-index: 1;
  display: flex;
  flex-direction: column;
  width: 179px;
  padding-right: 2px;
  border-right: 1px solid #999;
  background: #f7f7f7;
}
.grip { display: grid; place-items: center; height: 13px; border-bottom: 1px solid #d5d5d5; }
.panel-tabs { display: flex; height: 20px; margin-top: 3px; }
.panel-tabs button {
  display: grid;
  place-items: center;
  width: 30px;
  border: 1px solid #999;
  border-left: 0;
  background: #d2d2d2;
}
.panel-tabs .current { border-color: transparent #999 transparent transparent; background: none; }
.panel-tabs .more { margin-left: auto; width: 14px; border: 0; background: none; }
.panel-tabs .more svg, .scroll svg { width: 8px; height: 8px; }
.filter { display: flex; align-items: center; height: 19px; margin-left: 2px; padding-left: 2px; border: 1px solid #ccc; }
.filter input { flex: 1; min-width: 0; }
.root { display: flex; align-items: center; gap: 2px; height: 16px; padding-left: 2px; white-space: nowrap; }
.tree {
  display: grid;
  grid-auto-rows: 1fr;
  height: 233px;
  margin: 0;
  padding: 0;
  list-style: none;
  border-bottom: 2px solid #3a66bd;
}
.tree li { display: flex; align-items: center; gap: 4px; padding-left: 18px; }
.tree .open { padding-left: 6px; }
.tree .open::before { content: ""; margin-right: 5px; border: 2px solid transparent; border-left: 3px solid #555; border-right: 0; }
.scroll { display: flex; align-items: center; gap: 2px; height: 12px; margin-top: auto; background: #f2f2f2; }
.scroll button { width: 10px; padding-left: 1px; }
.thumb { width: 135px; height: 10px; margin-right: auto; background: #cdcdcd; }
.splitter {
  position: absolute;
  top: 199px;
  right: -6px;
  display: grid;
  place-items: center;
  width: 7px;
  height: 29px;
  border: 1px solid #999;
  border-left: 0;
  background: #f7f7f7;
}

.view {
  position: relative;
  flex: 1;
  display: grid;
  place-items: center;
  padding-bottom: 24px;
  background: #c4c8d4;
}
.model { width: 360px; height: 330px; }
.hud { position: absolute; top: -13px; left: 286px; display: flex; align-items: center; gap: 4px; }
.hud svg { width: 16px; height: 16px; }
.hud .caret { margin: 0 1px; border-top-color: #888; }
.doc-tools { position: absolute; top: -10px; right: 8px; display: flex; gap: 9px; color: #888; }
.triad { position: absolute; left: 9px; bottom: 27px; width: 42px; height: 42px; overflow: visible; }
.triad text { font: 9px "Liberation Sans", sans-serif; }
.view-name { position: absolute; left: 8px; bottom: 1px; font: 700 9px/10px "Open Sans", sans-serif; }
.edge { width: 4px; background: #eee; border-left: 1px solid #ddd; }
.task-pane {
  position: absolute;
  top: 27px;
  right: 0;
  width: 20px;
  border: 1px solid #999;
  border-right: 0;
}
.task-pane button { display: grid; place-items: center; width: 100%; height: 18px; border-bottom: 1px solid #aaa; background: #d8d8d8; }
.task-pane .current { background: #f7f7f7; }
.task-pane button:last-child { border: 0; }

/* Sheet tabs and status bar */
.sheets { display: flex; height: 12px; border-top: 1px solid #999; }
.sheets a { padding: 0 6px; border-right: 1px solid #999; background: #d2d2d2; }
.sheets .current { padding: 0 7px 0 9px; background: #f7f7f7; font-weight: 700; }
.sheets .study { padding-right: 13px; }
.pager { display: flex; width: 50px; padding: 0 1px; background: #aaa; }
.pager button { flex: 1; display: grid; place-items: center; border-right: 1px solid #888; }
.pager svg { width: 7px; height: 7px; fill: #888; stroke: #888; }
.status { display: flex; align-items: center; height: 14px; padding: 0 2px 0 1px; border-top: 1px solid #999; }
.edition { margin-right: auto; }
.cell { display: flex; align-items: center; align-self: stretch; width: 6px; border-left: 1px solid #d5d5d5; }
.mode { width: 54px; padding-left: 3px; }
.gap { width: 12px; }
.units { width: 118px; gap: 14px; padding-left: 22px; }
```
